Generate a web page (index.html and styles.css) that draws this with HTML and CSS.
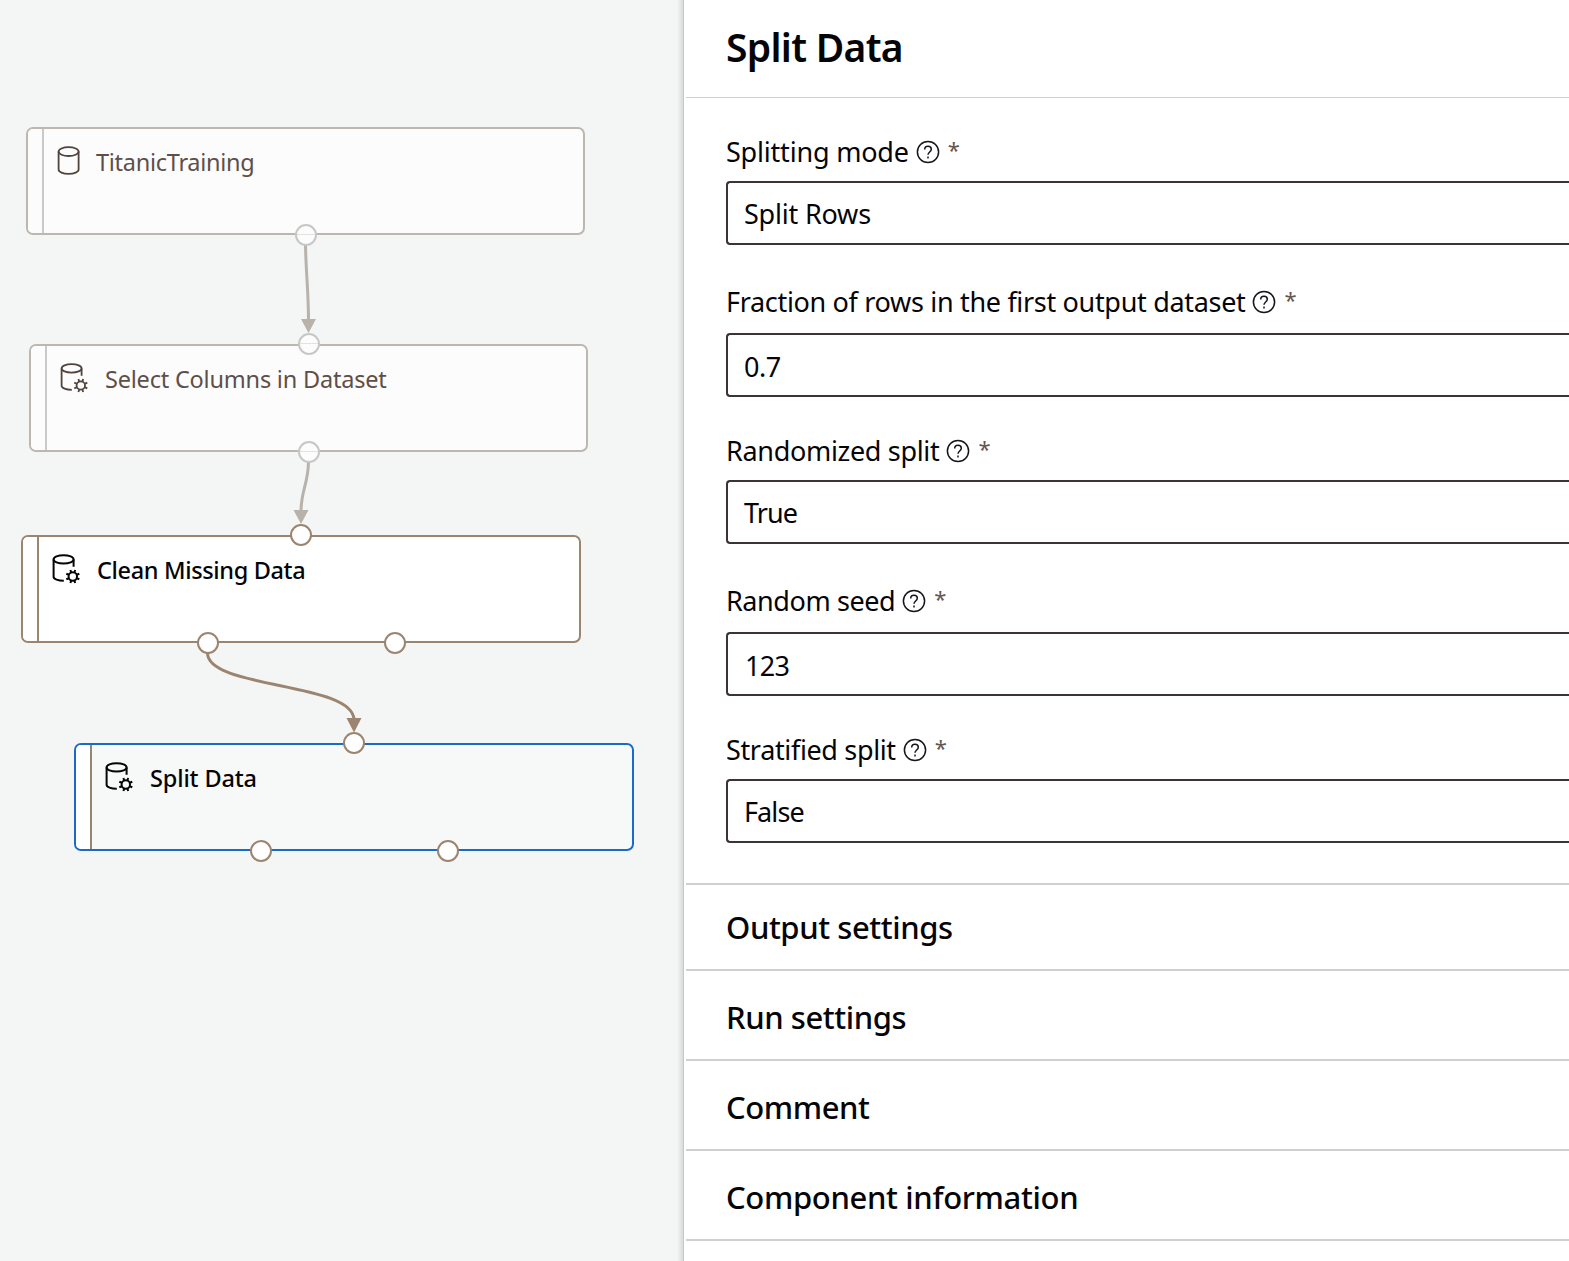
FILE: index.html
```html
<!DOCTYPE html>
<html lang="en">
<head>
<meta charset="utf-8">
<title>Split Data</title>
<link rel="stylesheet" href="styles.css">
</head>
<body>
<svg class="sprite" width="0" height="0" aria-hidden="true">
  <symbol id="i-data" viewBox="0 0 28 30">
    <ellipse cx="12.600" cy="5.600" rx="10" ry="4.400"/>
    <path d="M2.600 5.600v18c0 2.400 4.400 4.300 10 4.300s10-1.900 10-4.300v-18"/>
  </symbol>
  <symbol id="i-gear" viewBox="0 0 28 30">
    <ellipse cx="11.600" cy="5.400" rx="10" ry="4.200"/>
    <path d="M1.600 5.400v17.400c0 2.300 4.400 4 10.200 4M21.600 5.400v7.400"/>
    <circle cx="20.800" cy="22.500" r="4.200"/>
    <path d="M19.300 18.700l-.9-2.700M22.300 18.700l.9-2.700M24.600 20.800l2.700-1.100M24.600 24.200l2.700 1.100M22.300 26.300l.9 2.700M19.300 26.300l-.9 2.700M17 24.200l-2.700 1.100M17 20.800l-2.700-1.100"/>
  </symbol>
  <symbol id="i-help" viewBox="0 0 24 24">
    <circle cx="12" cy="12" r="10.600"/>
    <path d="M8.700 9.500c0-1.900 1.400-3.200 3.300-3.200s3.300 1.200 3.300 3c0 2.700-3.300 2.800-3.300 5.500"/>
    <path d="M12 16.500v1.900"/>
  </symbol>
</svg>
<div class="app">
  <main class="canvas">
    <svg class="edges" width="683" height="1261">
      <g class="edge edge-dim">
        <path d="M305.500 245C306 275 308.500 290 308.500 322"/>
        <path class="tip" d="M301 319h15l-7.500 14z"/>
        <path d="M308.500 462C308 485 301 490 301 512"/>
        <path class="tip" d="M293.500 510h15l-7.500 14z"/>
      </g>
      <g class="edge">
        <path d="M207.500 653C207.500 689 354 682 354 720"/>
        <path class="tip" d="M346.500 718h15l-7.500 14.500z"/>
      </g>
    </svg>
    <section class="node dim n1"><div class="grip"></div><svg class="icon"><use href="#i-data"/></svg><span class="name t1">TitanicTraining</span><i class="port out mid"></i></section>
    <section class="node dim n2"><div class="grip"></div><svg class="icon"><use href="#i-gear"/></svg><span class="name t2">Select Columns in Dataset</span><i class="port in mid"></i><i class="port out mid"></i></section>
    <section class="node n3"><div class="grip"></div><svg class="icon"><use href="#i-gear"/></svg><span class="name t3">Clean Missing Data</span><i class="port in mid"></i><i class="port out first"></i><i class="port out second"></i></section>
    <section class="node selected n4"><div class="grip"></div><svg class="icon"><use href="#i-gear"/></svg><span class="name t4">Split Data</span><i class="port in mid"></i><i class="port out first"></i><i class="port out second"></i></section>
  </main>
  <aside class="panel">
    <header class="head"><h1><span>Split Data</span></h1></header>
    <div class="fields">
      <div class="field"><label><span class="l1">Splitting mode</span><svg class="help"><use href="#i-help"/></svg><b>*</b></label><div class="box"><span class="v1">Split Rows</span></div></div>
      <div class="field typed"><label><span class="l2">Fraction of rows in the first output dataset</span><svg class="help"><use href="#i-help"/></svg><b>*</b></label><div class="box"><span class="v2">0.7</span></div></div>
      <div class="field"><label><span class="l3">Randomized split</span><svg class="help"><use href="#i-help"/></svg><b>*</b></label><div class="box"><span class="v3">True</span></div></div>
      <div class="field typed"><label><span class="l4">Random seed</span><svg class="help"><use href="#i-help"/></svg><b>*</b></label><div class="box"><span class="v4">123</span></div></div>
      <div class="field"><label><span class="l5">Stratified split</span><svg class="help"><use href="#i-help"/></svg><b>*</b></label><div class="box"><span class="v5">False</span></div></div>
    </div>
    <h2 class="first-row"><span class="s1">Output settings</span></h2>
    <h2><span class="s2">Run settings</span></h2>
    <h2><span class="s3">Comment</span></h2>
    <h2><span class="s4">Component information</span></h2>
    <div class="rest"></div>
  </aside>
</div>
</body>
</html>
```
FILE: styles.css
```css
* { box-sizing: border-box; }
body { margin: 0; font-family: "Noto Sans", "Open Sans", sans-serif; color: #050508; background: #fff; }
.sprite { position: absolute; }
.app { display: flex; width: 1569px; height: 1261px; overflow: hidden; }
.canvas { position: relative; flex: 0 0 683px; background: linear-gradient(to right, #f4f6f5 677px, #d9dbda 683px); }
.edges { position: absolute; left: 0; top: 0; }
.edge path { fill: none; stroke: #9c8570; stroke-width: 3; }
.edge .tip { fill: #9c8570; stroke: none; }
.edge-dim path { stroke: #b9b2aa; }
.edge-dim .tip { fill: #b9b2aa; }

.node { position: absolute; display: flex; width: 560px; height: 108px; border: 2px solid #9c8570; border-radius: 7px; background: #fff; }
.n1 { left: 26px; top: 127px; }
.n2 { left: 29px; top: 344px; }
.n3 { left: 21px; top: 535px; }
.n4 { left: 74px; top: 743px; }
.grip { flex: none; width: 16px; border-right: 2px solid #9c8570; border-radius: 5px 0 0 5px; background: #fff; }
.icon { flex: none; width: 28px; height: 30px; margin: 17px 0 0 13px; fill: none; stroke: #050508; stroke-width: 2; }
.name { margin: 17px 0 0 17px; font-size: 23.500px; line-height: 32px; font-weight: 500; white-space: nowrap; }
.n1 .icon { margin-left: 12px; }
.n1 .name { margin-left: 12px; }
.t1 { letter-spacing: -.27px; }
.t2 { letter-spacing: -.2px; }
.t3 { letter-spacing: -.35px; }
.t4 { letter-spacing: -.15px; }
.dim { width: 559px; background: #fcfcfc; border-color: #bdb7b0; }
.dim .grip { border-color: #c8cac8; background: #fcfcfc; }
.dim .icon { stroke: #51443e; stroke-width: 1.800; }
.dim .name { color: #5e4f48; font-weight: 400; }
.selected { border-color: #1b6ac9; background: #f7f8f8; }
.port { position: absolute; width: 22px; height: 22px; border: 2px solid #9c8570; border-radius: 50%; background: #fff; }
.dim .port { border-color: #c6c8c6; background: linear-gradient(#fcfcfc 8px, #e2e2e2 8px, #e2e2e2 9px, #fcfcfc 9px); }
.in { top: -13px; }
.out { bottom: -13px; }
.mid { left: 267px; }
.first { left: 174px; }
.second { left: 361px; }

.panel { flex: 1; min-width: 0; display: flex; flex-direction: column; border-left: 1px solid #c6c8c7; padding-left: 2px; background: #fff; }
.head { flex: none; height: 98px; border-bottom: 1px solid #cfcfcf; padding: 19px 0 0 40px; }
h1 { margin: 0; font-size: 39px; line-height: 56px; font-weight: 600; letter-spacing: -.7px; }
.fields { flex: none; height: 785px; padding: 34px 0 0 40px; }
.field { margin-bottom: 37px; }
.typed { margin-bottom: 34px; }
label { display: flex; align-items: center; height: 40px; margin-bottom: 9px; font-size: 27px; line-height: 38px; white-space: nowrap; }
.typed label { margin-bottom: 11px; }
.help { width: 24px; height: 24px; margin-left: 7px; fill: none; stroke: #15151b; stroke-width: 1.500; }
label b { margin-left: 8px; padding-bottom: 7px; font-size: 22px; font-weight: 400; color: #65564e; }
.box { display: flex; align-items: center; height: 64px; border: 2px solid #3b3335; border-right: 0; border-radius: 4px 0 0 4px; padding-left: 16px; font-size: 27px; }
.typed .box { padding-top: 2px; }
.l1, .v1 { letter-spacing: -.2px; }
.l2, .l3 { letter-spacing: -.32px; }
.l4 { letter-spacing: -.42px; }
.l5 { letter-spacing: -.35px; }
.v2 { letter-spacing: -.5px; }
.v3, .v5 { letter-spacing: -.9px; }
.v4 { letter-spacing: -.7px; padding-left: 1px; }
h2 { flex: none; height: 90px; margin: 0; border-top: 2px solid #d0d0d0; padding-top: 24px; padding-left: 40px; font-size: 31px; line-height: 44px; font-weight: 500; letter-spacing: -.42px; }
.s4 { letter-spacing: -.34px; }
.first-row { height: 86px; padding-top: 20px; }
.rest { flex: 1; border-top: 2px solid #d0d0d0; }
```
